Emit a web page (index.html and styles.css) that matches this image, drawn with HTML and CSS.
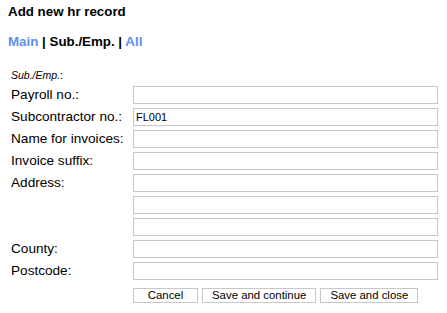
FILE: index.html
```html
<!DOCTYPE html>
<html lang="en">
<head>
    <meta charset="utf-8">
    <title>Add new hr record</title>
    <link rel="stylesheet" href="styles.css">
</head>
<body>
    <h1 class="titel">Add new hr record</h1>
    <nav class="faner">
        <a href="#" class="fane">Main</a> | <span class="fane aktiv">Sub./Emp.</span> | <a href="#" class="fane">All</a>
    </nav>
    <form class="skema">
        <div class="sektion"><em>Sub./Emp.</em>:</div>
        <div class="felter">
            <label for="payroll">Payroll no.:</label>
            <input id="payroll" type="text">

            <label for="subno">Subcontractor no.:</label>
            <input id="subno" type="text" value="FL001">

            <label for="invname">Name for invoices:</label>
            <input id="invname" type="text">

            <label for="suffix">Invoice suffix:</label>
            <input id="suffix" type="text">

            <label for="adr1">Address:</label>
            <input id="adr1" type="text">

            <span></span>
            <input type="text">

            <span></span>
            <input type="text">

            <label for="county">County:</label>
            <input id="county" type="text">

            <label for="postcode">Postcode:</label>
            <input id="postcode" type="text">
        </div>
        <div class="knapper">
            <button type="button">Cancel</button>
            <button type="button">Save and continue</button>
            <button type="button">Save and close</button>
        </div>
    </form>
</body>
</html>
```

FILE: styles.css
```css
body {
    margin: 0;
    font-family: "Liberation Sans", Arial, sans-serif;
    color: #000;
    background: #fff;
}

.titel {
    margin: 0;
    padding: 4px 8px 0;
    font-size: 13.33px;
    line-height: 15px;
}

.faner {
    margin-top: 15px;
    padding-left: 8px;
    font-size: 13.33px;
    font-weight: bold;
    line-height: 15px;
}

.fane {
    color: #5b8ff0;
    text-decoration: none;
}

.fane.aktiv {
    color: #000;
}

.skema {
    padding: 0 10px 0 11px;
}

.sektion {
    margin-top: 20px;
    font-size: 10.5px;
    line-height: 12px;
}

.felter {
    display: grid;
    grid-template-columns: 122px 305px;
    grid-auto-rows: 18px;
    row-gap: 4px;
    margin-top: 5px;
    font-size: 13.6px;
}

.felter label {
    line-height: 18px;
}

.felter input {
    box-sizing: border-box;
    width: 305px;
    height: 18px;
    margin: 0;
    padding: 0 2px;
    border: 1px solid #c8c8c8;
    font-family: "Liberation Sans", Arial, sans-serif;
    font-size: 11px;
}

.knapper {
    display: flex;
    gap: 4px;
    margin: 8px 0 0 122px;
}

.knapper button {
    flex-shrink: 0;
    box-sizing: border-box;
    min-width: 65px;
    height: 15px;
    padding: 0 9px;
    border: 1px solid #c8c8c8;
    background: #fff;
    font-family: "Liberation Sans", Arial, sans-serif;
    font-size: 11.4px;
    line-height: 13px;
    white-space: nowrap;
}
```
